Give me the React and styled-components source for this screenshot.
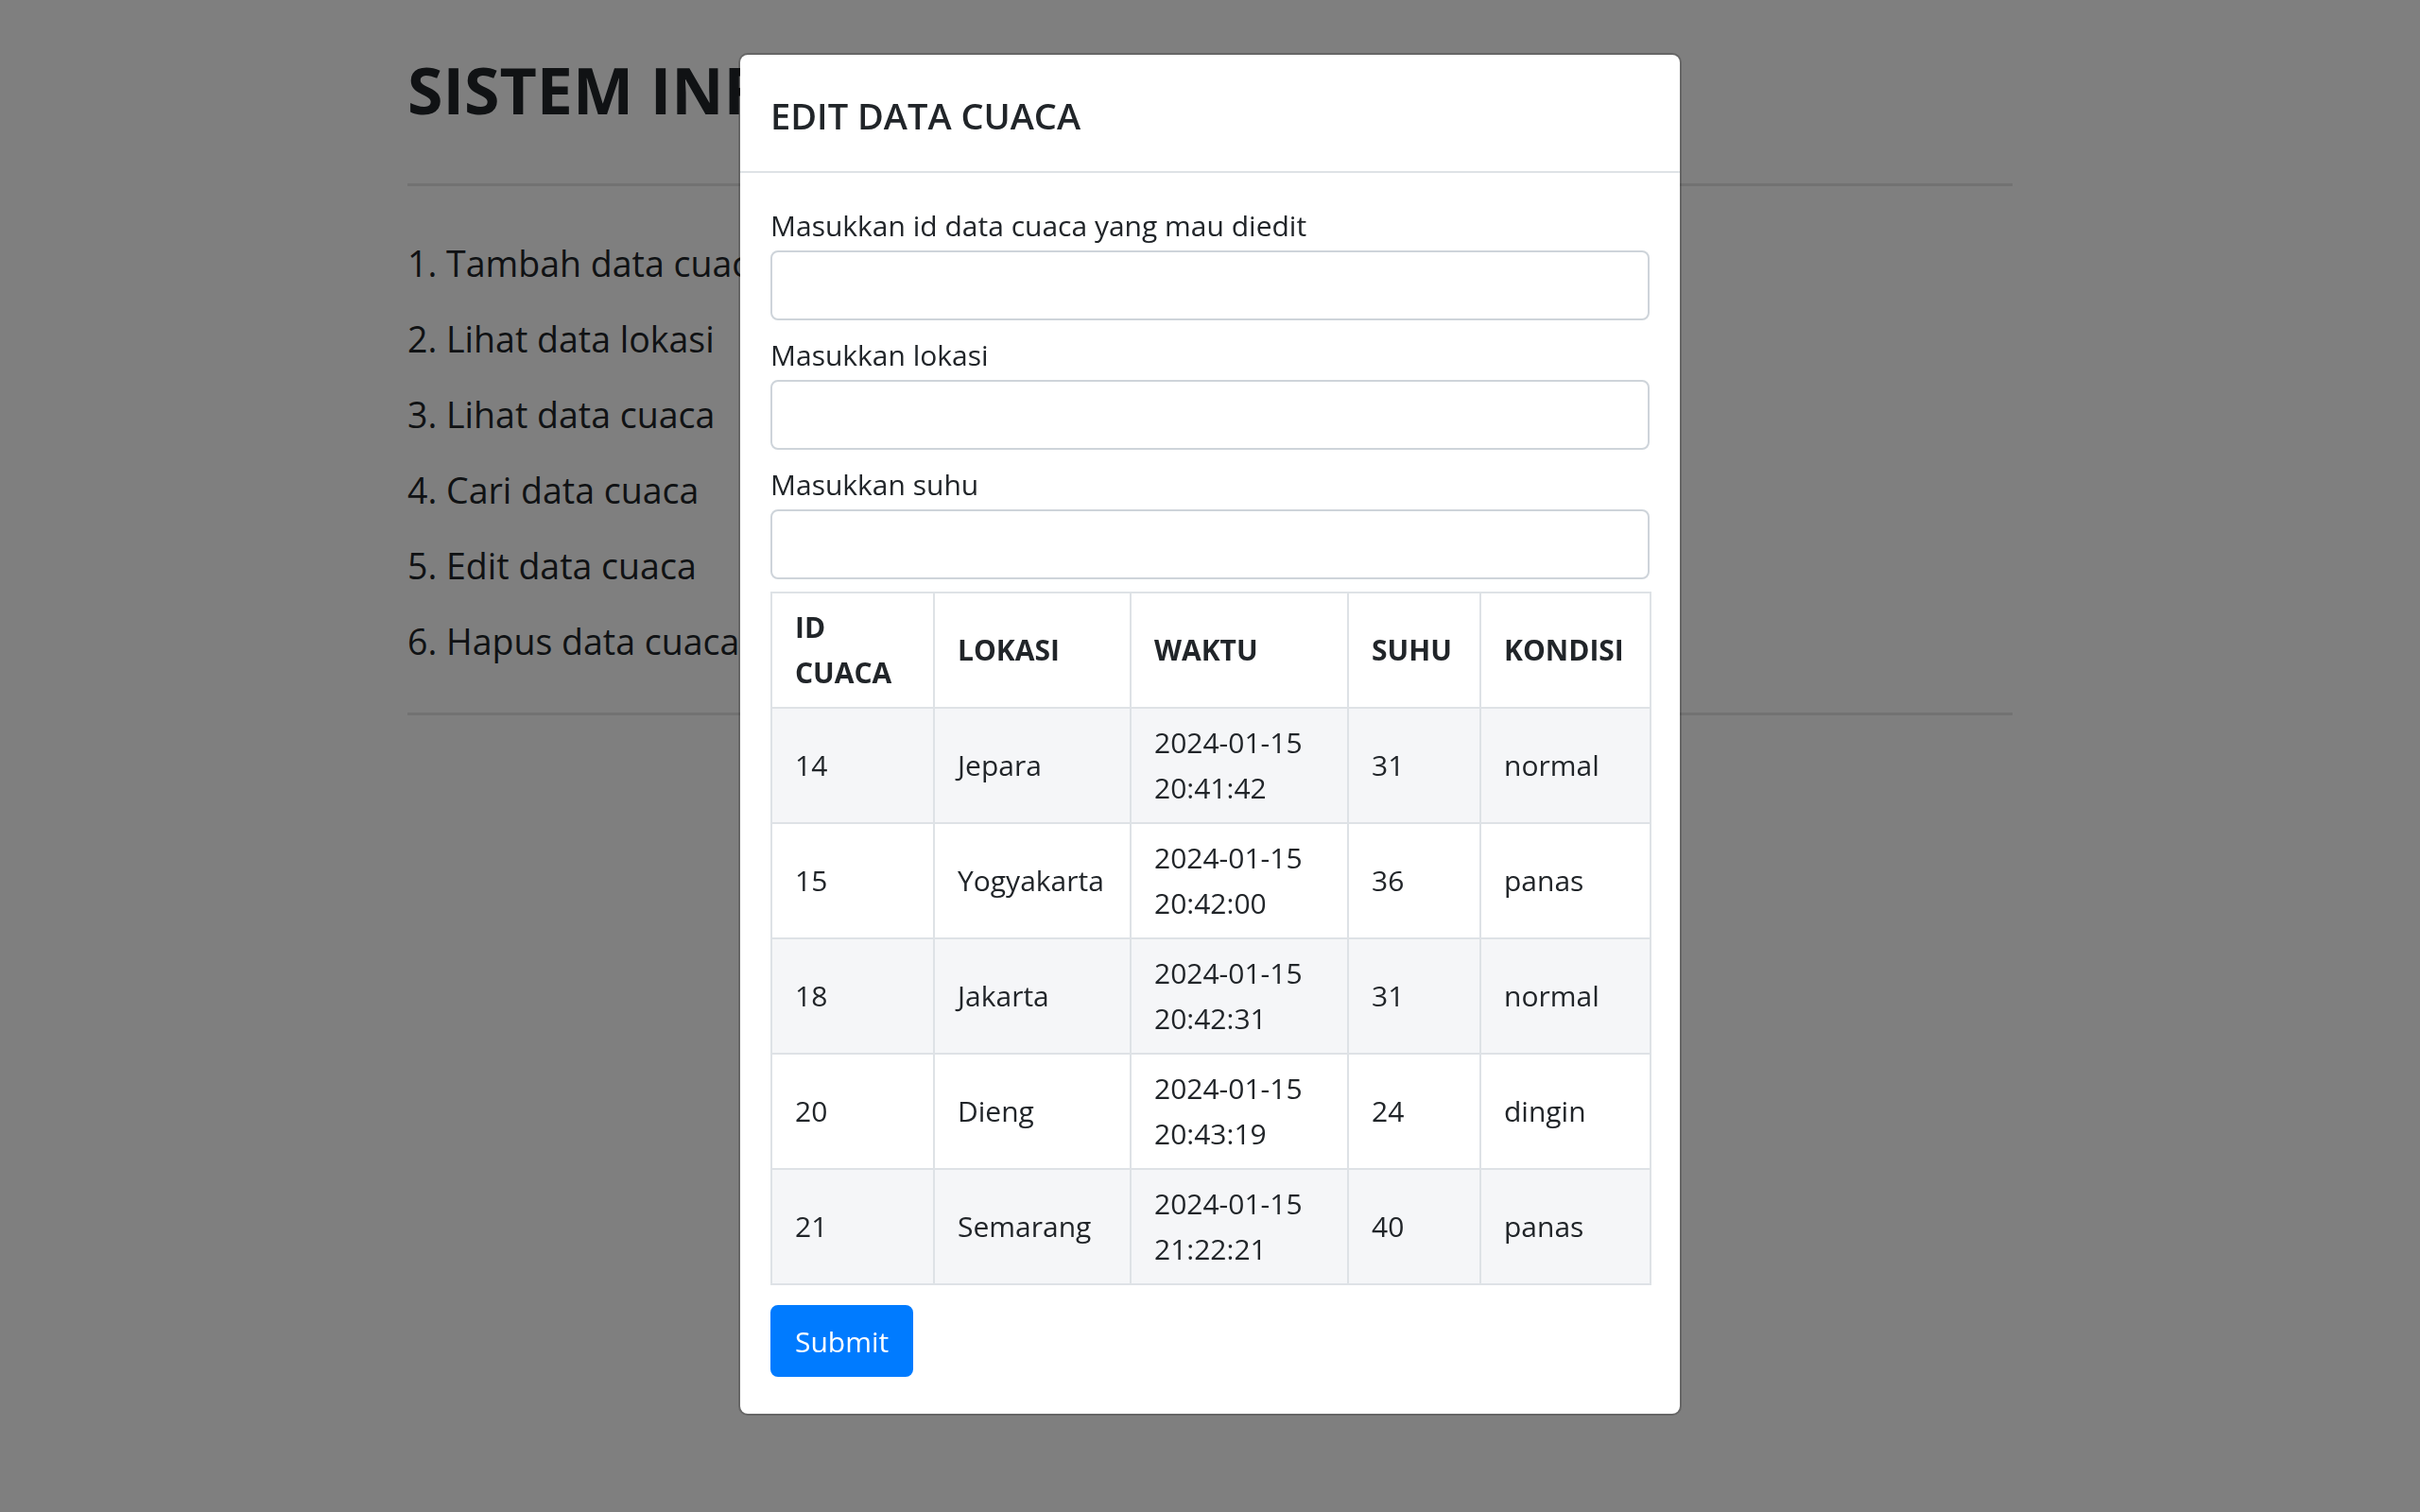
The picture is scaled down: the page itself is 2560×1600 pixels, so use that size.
import React from "react";
import styled, { createGlobalStyle } from "styled-components";

const GlobalStyle = createGlobalStyle`
  html, body {
    margin: 0;
    padding: 0;
    background: #fff;
  }
  body {
    font-family: "Open Sans", "Noto Sans", "Liberation Sans", sans-serif;
    color: #212529;
  }
  * {
    box-sizing: border-box;
  }
`;

const Container = styled.div`
  width: 1698px;
  margin: 0 auto;
  padding-top: 55px;
`;

const PageTitle = styled.h1`
  margin: 0;
  font-size: 68px;
  line-height: 80px;
  font-weight: 700;
  white-space: nowrap;
`;

const Rule = styled.hr`
  margin: ${props => props.top}px 0 0;
  border: 0;
  height: 3px;
  background: rgba(0, 0, 0, 0.1);
`;

const Menu = styled.div`
  display: flex;
  flex-direction: column;
  gap: 20px;
  margin-top: 52px;
`;

const MenuItem = styled.p`
  margin: 0;
  font-size: 37.5px;
  line-height: 60px;
  white-space: nowrap;
`;

const Backdrop = styled.div`
  position: fixed;
  inset: 0;
  background: rgba(0, 0, 0, 0.5);
`;

const ModalWrap = styled.div`
  position: fixed;
  inset: 0;
  overflow: auto;
`;

const Dialog = styled.div`
  width: 998px;
  margin: 56px auto;
  background: #fff;
  background-clip: padding-box;
  border: 2px solid rgba(0, 0, 0, 0.2);
  border-radius: 10px;
`;

const Header = styled.div`
  padding: 34px 32px 29px;
  border-bottom: 2px solid #dee2e6;
`;

const DialogTitle = styled.h5`
  margin: 0;
  font-size: 38px;
  line-height: 60px;
  font-weight: 600;
`;

const Body = styled.div`
  padding: 32px 32px 39px;
`;

const Group = styled.div`
  margin-bottom: 13px;
`;

const Label = styled.label`
  display: block;
  font-size: 30px;
  line-height: 48px;
  margin-bottom: 2px;
`;

const Input = styled.input`
  display: block;
  width: 100%;
  height: 74px;
  padding: 0 24px;
  font: inherit;
  font-size: 30px;
  color: #495057;
  background: #fff;
  border: 2px solid #ced4da;
  border-radius: 8px;
  outline: none;
`;

const Table = styled.table`
  width: 930px;
  table-layout: fixed;
  border-collapse: collapse;
  font-size: 30px;
  line-height: 48px;
`;

const Th = styled.th`
  padding: 12px 24px;
  border: 2px solid #dee2e6;
  font-weight: 700;
  text-align: left;
  vertical-align: middle;
`;

const Row = styled.tr`
  background: ${props => (props.striped ? "#f5f6f8" : "#fff")};
`;

const Td = styled.td`
  padding: 12px 24px;
  border: 2px solid #dee2e6;
  vertical-align: middle;
`;

const SubmitButton = styled.button`
  display: block;
  margin-top: 21px;
  height: 76px;
  padding: 0 24px;
  font: inherit;
  font-size: 30px;
  color: #fff;
  background: #007bff;
  border: 2px solid #007bff;
  border-radius: 8px;
`;

const menu = [
  "1. Tambah data cuaca",
  "2. Lihat data lokasi",
  "3. Lihat data cuaca",
  "4. Cari data cuaca",
  "5. Edit data cuaca",
  "6. Hapus data cuaca",
];

const columns = [
  { title: "ID CUACA", width: 172 },
  { title: "LOKASI", width: 208 },
  { title: "WAKTU", width: 230 },
  { title: "SUHU", width: 140 },
  { title: "KONDISI", width: 180 },
];

const rows = [
  { id: 14, lokasi: "Jepara", waktu: "2024-01-15 20:41:42", suhu: 31, kondisi: "normal" },
  { id: 15, lokasi: "Yogyakarta", waktu: "2024-01-15 20:42:00", suhu: 36, kondisi: "panas" },
  { id: 18, lokasi: "Jakarta", waktu: "2024-01-15 20:42:31", suhu: 31, kondisi: "normal" },
  { id: 20, lokasi: "Dieng", waktu: "2024-01-15 20:43:19", suhu: 24, kondisi: "dingin" },
  { id: 21, lokasi: "Semarang", waktu: "2024-01-15 21:22:21", suhu: 40, kondisi: "panas" },
];

const fields = [
  "Masukkan id data cuaca yang mau diedit",
  "Masukkan lokasi",
  "Masukkan suhu",
];

const App = () => {
  return (
    <>
      <GlobalStyle />
      <Container>
        <PageTitle>SISTEM INFORMASI CUACA</PageTitle>
        <Rule top={59} />
        <Menu>
          {menu.map(item => (
            <MenuItem key={item}>{item}</MenuItem>
          ))}
        </Menu>
        <Rule top={45} />
      </Container>

      <Backdrop />
      <ModalWrap>
        <Dialog>
          <Header>
            <DialogTitle>EDIT DATA CUACA</DialogTitle>
          </Header>
          <Body>
            {fields.map(label => (
              <Group key={label}>
                <Label>{label}</Label>
                <Input type="text" />
              </Group>
            ))}
            <Table>
              <colgroup>
                {columns.map(col => (
                  <col key={col.title} style={{ width: col.width }} />
                ))}
              </colgroup>
              <thead>
                <tr>
                  {columns.map(col => (
                    <Th key={col.title}>{col.title}</Th>
                  ))}
                </tr>
              </thead>
              <tbody>
                {rows.map((row, i) => (
                  <Row key={row.id} striped={i % 2 === 0}>
                    <Td>{row.id}</Td>
                    <Td>{row.lokasi}</Td>
                    <Td>{row.waktu}</Td>
                    <Td>{row.suhu}</Td>
                    <Td>{row.kondisi}</Td>
                  </Row>
                ))}
              </tbody>
            </Table>
            <SubmitButton type="submit">Submit</SubmitButton>
          </Body>
        </Dialog>
      </ModalWrap>
    </>
  );
};

export default App;
